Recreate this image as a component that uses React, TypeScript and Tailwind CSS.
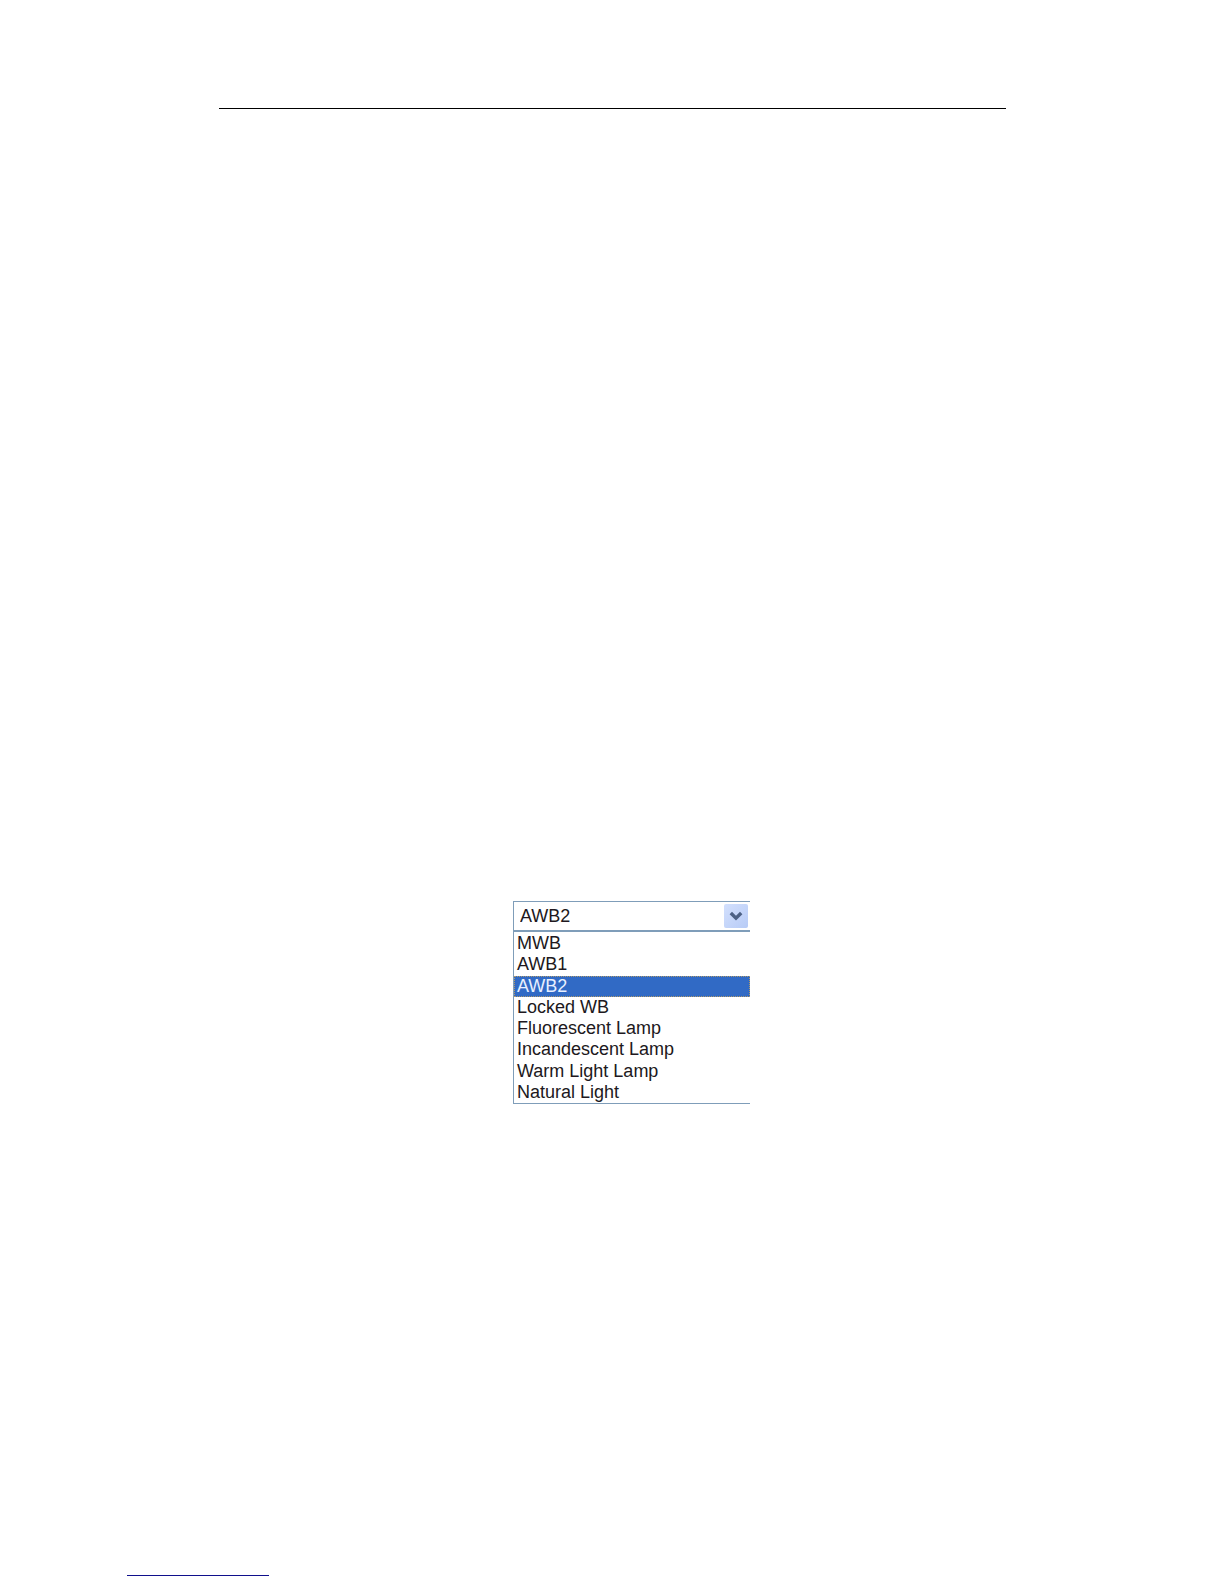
import { useState } from "react";

const whiteBalanceModes = [
  "MWB",
  "AWB1",
  "AWB2",
  "Locked WB",
  "Fluorescent Lamp",
  "Incandescent Lamp",
  "Warm Light Lamp",
  "Natural Light",
];

interface WhiteBalanceSelectProps {
  value: string;
  onChange: (mode: string) => void;
}

const ChevronIcon = () => (
  <svg viewBox="0 0 24 24" className="w-6 h-6" aria-hidden="true">
    <path
      d="M6.8 9 L12 14.2 L17.2 9"
      fill="none"
      stroke="#4d6185"
      strokeWidth="3.4"
    />
  </svg>
);

const WhiteBalanceSelect = ({ value, onChange }: WhiteBalanceSelectProps) => {
  return (
    <div className="w-[237px] border-l border-[#7f9db9] text-lg text-[#201820]">
      <div className="relative">
        <select
          aria-label="White balance"
          value={value}
          onChange={(e) => onChange(e.target.value)}
          className="block w-full h-[31px] appearance-none border-t border-b-2 border-[#7f9db9] bg-white pl-1.5 pr-8 outline-none"
        >
          {whiteBalanceModes.map((mode) => (
            <option key={mode}>{mode}</option>
          ))}
        </select>
        <span className="pointer-events-none absolute right-0.5 top-[3px] rounded-xs bg-linear-to-br from-[#d3e0fd] to-[#b7cbf6]">
          <ChevronIcon />
        </span>
      </div>

      <ul className="grid h-[172px] grid-rows-8 border-b border-[#7f9db9] bg-white pt-px">
        {whiteBalanceModes.map((mode) => (
          <li key={mode}>
            <button
              type="button"
              onClick={() => onChange(mode)}
              className={
                mode === value
                  ? "block w-full h-[21px] border border-dotted border-[#b09a6a] bg-[#316ac5] pl-0.5 text-left leading-[19px] text-[#e8f0ff]"
                  : "block w-full h-[21px] pl-[3px] text-left leading-[21px]"
              }
            >
              {mode}
            </button>
          </li>
        ))}
      </ul>
    </div>
  );
};

export default function App() {
  const [mode, setMode] = useState("AWB2");

  return (
    <div className="flex min-h-screen flex-col bg-white font-['Liberation_Sans',Arial,sans-serif]">
      <header className="px-[218px] pt-[108px]">
        <hr className="ml-px border-t border-black" />
      </header>

      <main className="flex justify-center pt-[792px] pl-[39px]">
        <WhiteBalanceSelect value={mode} onChange={setMode} />
      </main>

      <footer className="mt-auto pb-2 pl-[127px]">
        <hr className="w-[142px] border-t border-[#10108c]" />
      </footer>
    </div>
  );
}
